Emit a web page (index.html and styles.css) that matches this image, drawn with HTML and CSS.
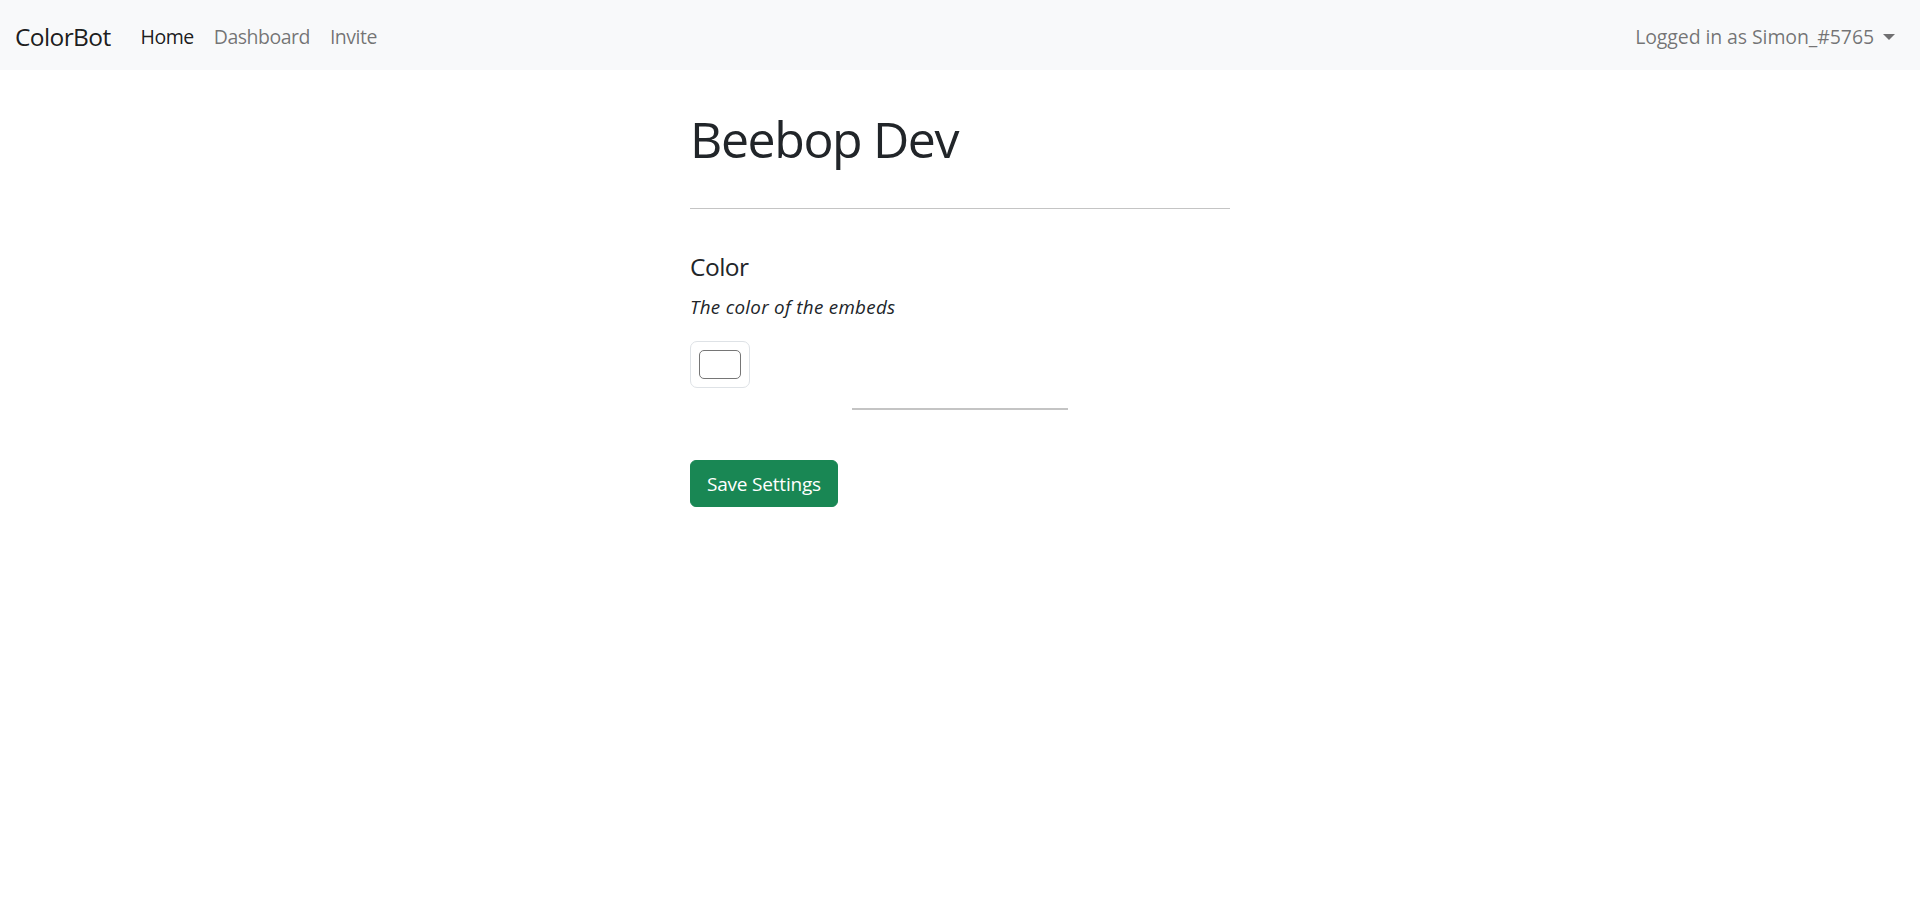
FILE: index.html
```html
<!DOCTYPE html>
<html lang="en">
<head>
<meta charset="utf-8">
<title>ColorBot</title>
<link rel="stylesheet" href="styles.css">
</head>
<body>
<nav class="navbar">
  <div class="nav-left">
    <a class="brand" href="#">ColorBot</a>
    <ul class="nav-links">
      <li><a class="nav-link active" href="#">Home</a></li>
      <li><a class="nav-link" href="#">Dashboard</a></li>
      <li><a class="nav-link" href="#">Invite</a></li>
    </ul>
  </div>
  <a class="nav-link dropdown" href="#">Logged in as Simon_#5765<span class="caret"></span></a>
</nav>
<main class="content">
  <h1 class="title">Beebop Dev</h1>
  <hr class="rule">
  <section class="setting">
    <h5 class="setting-name">Color</h5>
    <p class="setting-desc">The color of the embeds</p>
    <div class="color-control"><span class="swatch"></span></div>
    <hr class="short-rule">
  </section>
  <button class="btn-save" type="button">Save Settings</button>
</main>
</body>
</html>
```
FILE: styles.css
```css
* { box-sizing: border-box; }
html, body { margin: 0; padding: 0; background: #fff; }
body {
  font-family: "Open Sans", "Noto Sans", sans-serif;
  font-size: 20px;
  color: #212529;
}
a { text-decoration: none; }

.navbar {
  height: 70px;
  background: #f8f9fa;
  display: flex;
  align-items: center;
  justify-content: space-between;
  padding: 3px 15px 0;
}
.nav-left { display: flex; align-items: center; }
.brand {
  font-size: 24.5px;
  line-height: 37px;
  color: rgba(0,0,0,.9);
  margin-right: 20px;
  letter-spacing: -0.6px;
}
.nav-links { list-style: none; margin: 0; padding: 0; display: flex; }
.nav-link {
  display: block;
  padding: 10px;
  font-size: 19.5px;
  line-height: 30px;
  color: rgba(0,0,0,.55);
  letter-spacing: -0.5px;
}
.nav-link.active { color: rgba(0,0,0,.9); }
.dropdown { display: flex; align-items: center; letter-spacing: -0.1px; }
.caret {
  display: inline-block;
  margin-left: 9px;
  width: 0; height: 0;
  border-top: 6px solid rgba(0,0,0,.55);
  border-left: 6px solid transparent;
  border-right: 6px solid transparent;
}

.content {
  width: 540px;
  margin: 0 auto;
}
.title {
  margin: 39px 0 0;
  font-size: 50px;
  line-height: 60px;
  font-weight: 400;
  letter-spacing: -1.4px;
}
.rule {
  margin: 39px 0 0;
  border: 0;
  border-top: 1px solid #c4c4c4;
  height: 0;
}
.setting-name {
  margin: 43px 0 0;
  font-size: 24.5px;
  line-height: 30px;
  font-weight: 400;
  letter-spacing: -0.5px;
}
.setting-desc {
  margin: 12px 0 0;
  font-size: 18.8px;
  line-height: 26px;
  font-style: italic;
  letter-spacing: 0.3px;
}
.color-control {
  margin-top: 21px;
  width: 60px;
  height: 47px;
  border: 1px solid #dee2e6;
  border-radius: 7px;
  padding: 8px 8px;
  background: #fff;
}
.swatch {
  display: block;
  width: 100%;
  height: 100%;
  border: 1px solid #767676;
  border-radius: 5px;
  background: #fff;
}
.short-rule {
  width: 216px;
  margin: 20px auto 0;
  border: 0;
  border-top: 2px solid #c4c4c4;
  height: 0;
}
.btn-save {
  margin-top: 50px;
  font-family: inherit;
  font-size: 19px;
  line-height: 30px;
  padding: 7.5px 16px;
  color: #fff;
  background: #198754;
  border: 1px solid #198754;
  border-radius: 6px;
  letter-spacing: -0.2px;
  cursor: pointer;
}
```
